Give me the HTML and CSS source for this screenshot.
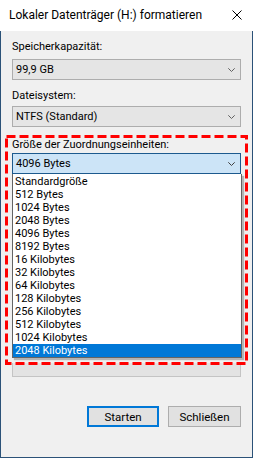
FILE: index.html
```html
<!DOCTYPE html>
<html lang="de">
<head>
  <meta charset="UTF-8">
  <title>Lokaler Datenträger (H:) formatieren</title>
  <link rel="stylesheet" href="styles.css">
</head>
<body>

<div class="window">
  <div class="titlebar">
    <span class="title">Lokaler Datenträger (H:) formatieren</span>
    <svg class="close" width="10" height="10" viewBox="0 0 10 10">
      <path d="M0.5 0.5 L9.5 9.5 M9.5 0.5 L0.5 9.5" stroke="#000" stroke-width="1" fill="none"/>
    </svg>
  </div>

  <div class="content">
    <div class="label label-first">Speicherkapazität:</div>
    <div class="combo">
      <span>99,9 GB</span>
      <svg class="chev" width="7" height="4" viewBox="0 0 7 4"><path d="M0.3 0.3 L3.5 3.5 L6.7 0.3" stroke="#606060" fill="none"/></svg>
    </div>

    <div class="label label-second">Dateisystem:</div>
    <div class="combo combo-second">
      <span>NTFS (Standard)</span>
      <svg class="chev" width="7" height="4" viewBox="0 0 7 4"><path d="M0.3 0.3 L3.5 3.5 L6.7 0.3" stroke="#606060" fill="none"/></svg>
    </div>

    <div class="label label-third">Größe der Zuordnungseinheiten:</div>
    <div class="combo-wrap">
      <div class="combo combo-focus">
        <span>4096 Bytes</span>
        <svg class="chev" width="7" height="4" viewBox="0 0 7 4"><path d="M0.3 0.3 L3.5 3.5 L6.7 0.3" stroke="#404040" fill="none"/></svg>
      </div>
      <ul class="droplist">
        <li>Standardgröße</li>
        <li>512 Bytes</li>
        <li>1024 Bytes</li>
        <li>2048 Bytes</li>
        <li>4096 Bytes</li>
        <li>8192 Bytes</li>
        <li>16 Kilobytes</li>
        <li>32 Kilobytes</li>
        <li>64 Kilobytes</li>
        <li>128 Kilobytes</li>
        <li>256 Kilobytes</li>
        <li>512 Kilobytes</li>
        <li>1024 Kilobytes</li>
        <li class="selected">2048 Kilobytes</li>
      </ul>
    </div>

    <div class="textbox"></div>

    <div class="buttons">
      <button class="btn btn-default">Starten</button>
      <button class="btn">Schließen</button>
    </div>
  </div>

  <svg class="highlight" width="243" height="230" viewBox="0 0 243 230">
    <rect x="1.5" y="1.5" width="240" height="227" fill="none" stroke="#ff0000" stroke-width="3" stroke-dasharray="9 4"/>
  </svg>
</div>

</body>
</html>
```

FILE: styles.css
```css
html, body {
  margin: 0;
  background: #f0f0f0;
  font-family: Roboto, "Noto Sans", sans-serif;
  font-size: 11px;
  color: #000;
}
.window {
  position: relative;
  width: 253px;
  height: 458px;
  box-sizing: border-box;
  background: #f0f0f0;
  display: flex;
  flex-direction: column;
}
.titlebar {
  height: 31px;
  background: #fff;
  display: flex;
  align-items: center;
  justify-content: space-between;
  padding: 0 11px 0 9px;
  flex-shrink: 0;
}
.title {
  font-size: 12px;
  line-height: 16px;
  margin-top: -2px;
}
.close {
  display: block;
  margin-top: -2px;
}
.content {
  flex: 1;
  padding: 0 11px;
  border: 1px solid #2b5278;
  border-top: none;
}
.label {
  line-height: 16px;
  white-space: nowrap;
}
.label-first {
  margin-top: 8px;
}
.label-second {
  margin-top: 8px;
}
.label-third {
  margin-top: 10px;
}
.combo {
  margin-top: 4px;
  height: 21px;
  box-sizing: border-box;
  border: 1px solid #adadad;
  background: #e5e5e5;
  display: flex;
  align-items: center;
  justify-content: space-between;
  padding: 0 5px 0 3px;
  line-height: 16px;
}
.combo-second {
  margin-top: 2px;
}
.combo-wrap {
  position: relative;
}
.combo-focus {
  margin-top: 0;
  background: #cce4f7;
  border-color: #1c5a8e;
}
.chev {
  display: block;
}
.droplist {
  position: absolute;
  left: 0;
  right: -1px;
  top: 21px;
  margin: 0;
  padding: 1px 0 0;
  list-style: none;
  background: #fff;
  border: 1px solid #646464;
  border-top: none;
  box-shadow: 2px 2px 1px rgba(0, 0, 0, 0.25);
  z-index: 5;
}
.droplist li {
  height: 13px;
  line-height: 13px;
  padding-left: 2px;
  white-space: nowrap;
}
.droplist li.selected {
  background: #0078d7;
  color: #fff;
}
.textbox {
  margin-top: 189px;
  height: 14px;
  box-sizing: border-box;
  border: 1px solid #c4c4c4;
  border-top: none;
  background: #e3e3e3;
}
.buttons {
  display: flex;
  justify-content: flex-end;
  gap: 9px;
  margin-top: 29px;
}
.btn {
  font-family: Roboto, "Noto Sans", sans-serif;
  font-size: 11.5px;
  height: 21px;
  width: 73px;
  box-sizing: border-box;
  border: 1px solid #adadad;
  background: #e1e1e1;
  padding: 0;
  line-height: 16px;
  color: #000;
}
.btn-default {
  width: 72px;
  border: 2px solid #0078d7;
}
.highlight {
  position: absolute;
  left: 5px;
  top: 135px;
  z-index: 10;
}
```
